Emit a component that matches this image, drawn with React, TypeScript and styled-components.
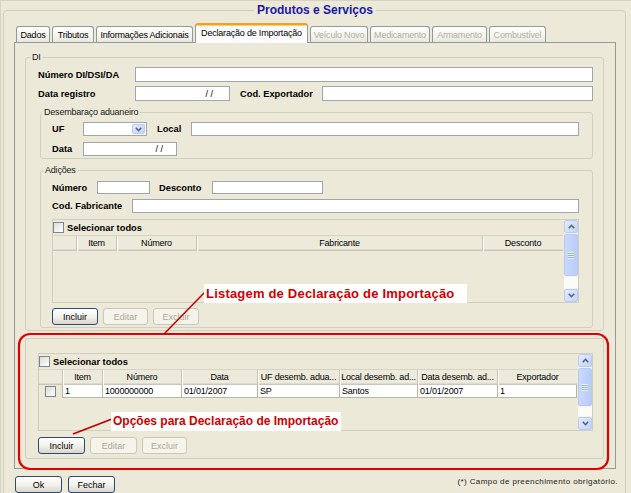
import React from "react";
import styled, { createGlobalStyle, css } from "styled-components";

const FONT = `"Liberation Sans", Arial, sans-serif`;

const GlobalStyle = createGlobalStyle`
  html, body { margin: 0; padding: 0; background: #ECE9D8; }
  body { font-family: ${FONT}; }
  * { box-sizing: border-box; }
`;

const Window = styled.div`
  position: relative;
  width: 631px;
  height: 493px;
  overflow: hidden;
  padding: 2px 5px 0 2px;
  border-top: 1px solid #D6D3C4;
  border-left: 1px solid #D6D3C4;
  background: #ECE9D8;
  font-family: ${FONT};
  font-size: 9px;
  color: #000;
`;

const OuterGroup = styled.fieldset`
  margin: 0;
  padding: 0 9px 0 10px;
  height: 540px;
  min-width: 0;
  border: 1px solid #D0D0BF;
  border-radius: 4px;
`;

const OuterTitle = styled.legend`
  margin: 0 auto;
  padding: 0 3px;
  font: bold 12px/14px ${FONT};
  color: #1818A8;
`;

const TabStrip = styled.div`
  position: relative;
  z-index: 1;
  display: flex;
  align-items: flex-end;
  gap: 2px;
  height: 19px;
  margin-top: 6px;
  padding-left: 2px;
`;

const Tab = styled.div<{ $w: number; $active?: boolean; $disabled?: boolean }>`
  width: ${(p) => p.$w}px;
  height: ${(p) => (p.$active ? 20 : 16)}px;
  margin-bottom: ${(p) => (p.$active ? -1 : 0)}px;
  display: flex;
  align-items: center;
  justify-content: center;
  border: 1px solid #919B9C;
  border-bottom: none;
  border-radius: 3px 3px 0 0;
  background: linear-gradient(#FFFFFF, #F4F3EE 60%, #E8E7DF);
  color: ${(p) => (p.$disabled ? "#B3B0A2" : "#000")};
  font-size: 9px;
  letter-spacing: -0.2px;
  white-space: nowrap;
  ${(p) =>
    p.$active &&
    css`
      background: #FCFCFE;
      border-top: 2px solid #E8A13A;
      box-shadow: inset 0 1px #FFCF5E;
      padding-bottom: 2px;
    `}
`;

const TabPanel = styled.div`
  border: 1px solid #919B9C;
  padding: 8px 11px 9px 10px;
  background: #ECE9D8;
`;

const Group = styled.fieldset<{ $mt?: number; $ml?: number; $pad: string }>`
  margin: ${(p) => p.$mt ?? 0}px 0 0 ${(p) => p.$ml ?? 0}px;
  padding: ${(p) => p.$pad};
  min-width: 0;
  border: 1px solid #D0D0BF;
  border-radius: 3px;
`;

const Legend = styled.legend<{ $mx: number }>`
  margin-left: ${(p) => p.$mx}px;
  padding: 0 2px;
  font-size: 9px;
  line-height: 12px;
  letter-spacing: -0.2px;
  color: #1A1A1A;
`;

const Row = styled.div<{ $h: number; $mt?: number }>`
  display: flex;
  align-items: center;
  height: ${(p) => p.$h}px;
  margin-top: ${(p) => p.$mt ?? 0}px;
`;

const Label = styled.span<{ $w: number; $ml?: number }>`
  flex: none;
  width: ${(p) => p.$w}px;
  margin-left: ${(p) => p.$ml ?? 0}px;
  font-weight: bold;
  font-size: 9.3px;
  white-space: nowrap;
`;

const TextBox = styled.div<{ $w?: number; $pr?: number }>`
  ${(p) => (p.$w ? css`width: ${p.$w}px; flex: none;` : css`flex: 1;`)}
  height: 100%;
  display: flex;
  align-items: center;
  justify-content: flex-end;
  padding-right: ${(p) => p.$pr ?? 0}px;
  background: #FFFFFF;
  border: 1px solid #9FA7AE;
  font-size: 9px;
`;

const Combo = styled.div<{ $w: number }>`
  flex: none;
  width: ${(p) => p.$w}px;
  height: 100%;
  display: flex;
  justify-content: flex-end;
  padding: 1px;
  background: #FFFFFF;
  border: 1px solid #9FA7AE;
`;

const XpButton = styled.div`
  display: flex;
  align-items: center;
  justify-content: center;
  border: 1px solid #B9CBF3;
  border-radius: 2px;
  background: linear-gradient(135deg, #E4ECFE, #C2D3FA);
`;

const ComboBtn = styled(XpButton)`
  width: 13px;
`;

const Chevron = ({ up }: { up?: boolean }) => (
  <svg width="7" height="5" viewBox="0 0 7 5">
    <polyline
      points={up ? "0.8,4.2 3.5,1.3 6.2,4.2" : "0.8,0.8 3.5,3.7 6.2,0.8"}
      fill="none"
      stroke="#4D6185"
      strokeWidth="1.6"
    />
  </svg>
);

const ButtonRow = styled.div<{ $mt: number; $gap: number }>`
  display: flex;
  gap: ${(p) => p.$gap}px;
  margin-top: ${(p) => p.$mt}px;
`;

const GridSlot = styled.div`
  flex: 1;
  min-width: 0;
`;

const Btn = styled.div<{ $w: number; $disabled?: boolean }>`
  width: ${(p) => p.$w}px;
  height: 17px;
  display: flex;
  align-items: center;
  justify-content: center;
  border: 1px solid #2C4A74;
  border-radius: 3px;
  background: linear-gradient(#FFFFFF, #F1F0EA 55%, #D9D5CA);
  font-size: 9px;
  color: #000;
  ${(p) =>
    p.$disabled &&
    css`
      border-color: #CAC8BB;
      background: #F5F4EA;
      color: #ACA899;
    `}
`;

/* ---------- grid ---------- */

const GridBox = styled.div<{ $h: number }>`
  display: flex;
  height: ${(p) => p.$h}px;
  border: 1px solid #D0CEC0;
  background: #ECE9D8;
`;

const GridMain = styled.div`
  flex: 1;
  min-width: 0;
  display: flex;
  flex-direction: column;
  overflow: hidden;
`;

const CheckRow = styled.div`
  display: flex;
  align-items: center;
  gap: 3px;
  height: 15px;
  font-weight: bold;
  font-size: 9.3px;
`;

const CheckBox = styled.span`
  display: inline-block;
  width: 11px;
  height: 11px;
  border: 1px solid #7B8795;
  background: linear-gradient(135deg, #DCDCD5, #FFFFFF);
`;

const HeaderRow = styled.div`
  display: flex;
  height: 16px;
  flex: none;
  border-top: 1px solid #D6D3C5;
  background: #EBEADB;
  box-shadow: inset 0 -1px #CBC7B8, inset 0 -2px #DEDACB;
`;

const HeaderCell = styled.div<{ $w: number }>`
  flex: none;
  width: ${(p) => p.$w}px;
  display: flex;
  align-items: center;
  justify-content: center;
  padding: 0 2px 1px;
  border-right: 1px solid #C7C5B2;
  box-shadow: 1px 0 #FFFFFF;
  overflow: hidden;
  white-space: nowrap;
  font-size: 9px;
  letter-spacing: -0.2px;
  &:last-child {
    border-right: none;
    box-shadow: none;
  }
`;

const DataRow = styled.div`
  display: flex;
  height: 13px;
  flex: none;
`;

const DataCell = styled.div<{ $w: number }>`
  flex: none;
  width: ${(p) => p.$w}px;
  display: flex;
  align-items: center;
  padding: 0 2px;
  background: #FFFFFF;
  border-right: 1px solid #B8B6A8;
  border-bottom: 1px solid #B8B6A8;
  overflow: hidden;
  white-space: nowrap;
  font-size: 9px;
  letter-spacing: -0.2px;
`;

const CheckCell = styled.div<{ $w: number }>`
  flex: none;
  width: ${(p) => p.$w}px;
  display: flex;
  align-items: center;
  justify-content: center;
  border-right: 1px solid #B8B6A8;
`;

const ScrollBar = styled.div`
  flex: none;
  width: 14px;
  margin-left: 1px;
  display: flex;
  flex-direction: column;
  gap: 1px;
  background: #F4F3EE;
`;

const ScrollBtn = styled(XpButton)`
  height: 13px;
  flex: none;
`;

const Thumb = styled(XpButton)<{ $h: number }>`
  height: ${(p) => p.$h}px;
  flex: none;
  background: linear-gradient(90deg, #C9D8FD, #B8CCF9);
  &::before {
    content: "";
    width: 6px;
    height: 7px;
    background: repeating-linear-gradient(#EEF3FE 0 1px, #8EAEEF 1px 2px);
  }
`;

const Track = styled.div`
  flex: 1;
  background: #FBFBF8;
`;

type Col = { w: number; label: string };

function DataGrid({ h, cols, rows, thumb }: { h: number; cols: Col[]; rows: string[][]; thumb: number }) {
  return (
    <GridBox $h={h}>
      <GridMain>
        <CheckRow>
          <CheckBox />
          Selecionar todos
        </CheckRow>
        <HeaderRow>
          {cols.map((c, i) => (
            <HeaderCell key={i} $w={c.w}>
              {c.label}
            </HeaderCell>
          ))}
        </HeaderRow>
        {rows.map((r, ri) => (
          <DataRow key={ri}>
            {cols.map((c, ci) =>
              ci === 0 ? (
                <CheckCell key={ci} $w={c.w}>
                  <CheckBox />
                </CheckCell>
              ) : (
                <DataCell key={ci} $w={c.w}>
                  {r[ci]}
                </DataCell>
              )
            )}
          </DataRow>
        ))}
      </GridMain>
      <ScrollBar>
        <ScrollBtn>
          <Chevron up />
        </ScrollBtn>
        <Thumb $h={thumb} />
        <Track />
        <ScrollBtn>
          <Chevron />
        </ScrollBtn>
      </ScrollBar>
    </GridBox>
  );
}

/* ---------- footer ---------- */

const Footer = styled.div`
  display: flex;
  justify-content: space-between;
  align-items: flex-start;
  margin-top: 7px;
  padding-left: 1px;
`;

const Note = styled.span`
  margin-right: -2px;
  margin-top: 1px;
  font-size: 8px;
  letter-spacing: 0.4px;
  color: #222;
`;

/* ---------- annotations ---------- */

const Overlay = styled.svg`
  position: absolute;
  left: 0;
  top: 0;
  width: 631px;
  height: 493px;
  pointer-events: none;
`;

const Callout = styled.div<{ $x: number; $y: number; $size: number; $ls: number; $pr: number }>`
  position: absolute;
  left: ${(p) => p.$x}px;
  top: ${(p) => p.$y}px;
  padding: 0 ${(p) => p.$pr}px 0 2px;
  background: #FFFFFF;
  color: #D00000;
  font: bold ${(p) => p.$size}px/19px ${FONT};
  letter-spacing: ${(p) => p.$ls}px;
  white-space: nowrap;
`;

const tabs = [
  { label: "Dados", w: 34 },
  { label: "Tributos", w: 42 },
  { label: "Informações Adicionais", w: 97 },
  { label: "Declaração de Importação", w: 113, active: true },
  { label: "Veículo Novo", w: 58, disabled: true },
  { label: "Medicamento", w: 60, disabled: true },
  { label: "Armamento", w: 55, disabled: true },
  { label: "Combustível", w: 57, disabled: true },
];

const adicaoCols: Col[] = [
  { w: 24, label: "" },
  { w: 40, label: "Item" },
  { w: 80, label: "Número" },
  { w: 286, label: "Fabricante" },
  { w: 80, label: "Desconto" },
];

const diCols: Col[] = [
  { w: 24, label: "" },
  { w: 40, label: "Item" },
  { w: 79, label: "Número" },
  { w: 76, label: "Data" },
  { w: 82, label: "UF desemb. adua..." },
  { w: 78, label: "Local desemb. ad..." },
  { w: 80, label: "Data desemb. ad..." },
  { w: 79, label: "Exportador" },
];

const diRows = [["", "1", "1000000000", "01/01/2007", "SP", "Santos", "01/01/2007", "1"]];

export default function App() {
  return (
    <>
      <GlobalStyle />
      <Window>
        <OuterGroup>
          <OuterTitle>Produtos e Serviços</OuterTitle>
          <TabStrip>
            {tabs.map((t) => (
              <Tab key={t.label} $w={t.w} $active={t.active} $disabled={t.disabled}>
                {t.label}
              </Tab>
            ))}
          </TabStrip>
          <TabPanel>
            <Group $pad="4px 10px 2px 12px">
              <Legend $mx={-8}>DI</Legend>
              <Row $h={15}>
                <Label $w={97}>Número DI/DSI/DA</Label>
                <TextBox />
              </Row>
              <Row $h={15} $mt={4}>
                <Label $w={97}>Data registro</Label>
                <TextBox $w={95} $pr={16}>/ /</TextBox>
                <Label $w={82} $ml={10}>Cod. Exportador</Label>
                <TextBox />
              </Row>

              <Group $mt={5} $ml={2} $pad="4px 13px 2px 11px">
                <Legend $mx={-10}>Desembaraço aduaneiro</Legend>
                <Row $h={14}>
                  <Label $w={31}>UF</Label>
                  <Combo $w={64}>
                    <ComboBtn>
                      <Chevron />
                    </ComboBtn>
                  </Combo>
                  <Label $w={34} $ml={10}>Local</Label>
                  <TextBox />
                </Row>
                <Row $h={14} $mt={6}>
                  <Label $w={31}>Data</Label>
                  <TextBox $w={94} $pr={13}>/ /</TextBox>
                </Row>
              </Group>

              <Group $mt={5} $ml={2} $pad="5px 13px 2px 11px">
                <Legend $mx={-9}>Adições</Legend>
                <Row $h={13}>
                  <Label $w={45}>Número</Label>
                  <TextBox $w={53} />
                  <Label $w={53} $ml={9}>Desconto</Label>
                  <TextBox $w={111} />
                </Row>
                <Row $h={14} $mt={5}>
                  <Label $w={80}>Cod. Fabricante</Label>
                  <TextBox />
                </Row>
                <ButtonRow $mt={6} $gap={0}>
                  <GridSlot>
                    <DataGrid h={84} cols={adicaoCols} rows={[]} thumb={42} />
                  </GridSlot>
                </ButtonRow>
                <ButtonRow $mt={5} $gap={5}>
                  <Btn $w={46}>Incluir</Btn>
                  <Btn $w={45} $disabled>
                    Editar
                  </Btn>
                  <Btn $w={46} $disabled>
                    Excluir
                  </Btn>
                </ButtonRow>
              </Group>
            </Group>

            <Group $mt={7} $pad="14px 10px 4px 12px">
              <DataGrid h={78} cols={diCols} rows={diRows} thumb={38} />
              <ButtonRow $mt={6} $gap={5}>
                <Btn $w={47}>Incluir</Btn>
                <Btn $w={47} $disabled>
                  Editar
                </Btn>
                <Btn $w={45} $disabled>
                  Excluir
                </Btn>
              </ButtonRow>
            </Group>
          </TabPanel>
          <Footer>
            <ButtonRow $mt={0} $gap={6}>
              <Btn $w={47}>Ok</Btn>
              <Btn $w={47}>Fechar</Btn>
            </ButtonRow>
            <Note>(*) Campo de preenchimento obrigatório.</Note>
          </Footer>
        </OuterGroup>

        <Overlay viewBox="0 0 631 493">
          <rect x="18" y="333" width="589" height="135" rx="11" ry="11" fill="none" stroke="#E00000" strokeWidth="2.2" />
          <line x1="204" y1="291" x2="163" y2="333" stroke="#C00000" strokeWidth="1.5" />
          <line x1="111" y1="418" x2="72" y2="433" stroke="#C00000" strokeWidth="1.8" />
        </Overlay>
        <Callout $x={203} $y={283} $size={13} $ls={0.2} $pr={12}>
          Listagem de Declaração de Importação
        </Callout>
        <Callout $x={110} $y={411} $size={12} $ls={0} $pr={3}>
          Opções para Declaração de Importação
        </Callout>
      </Window>
    </>
  );
}
